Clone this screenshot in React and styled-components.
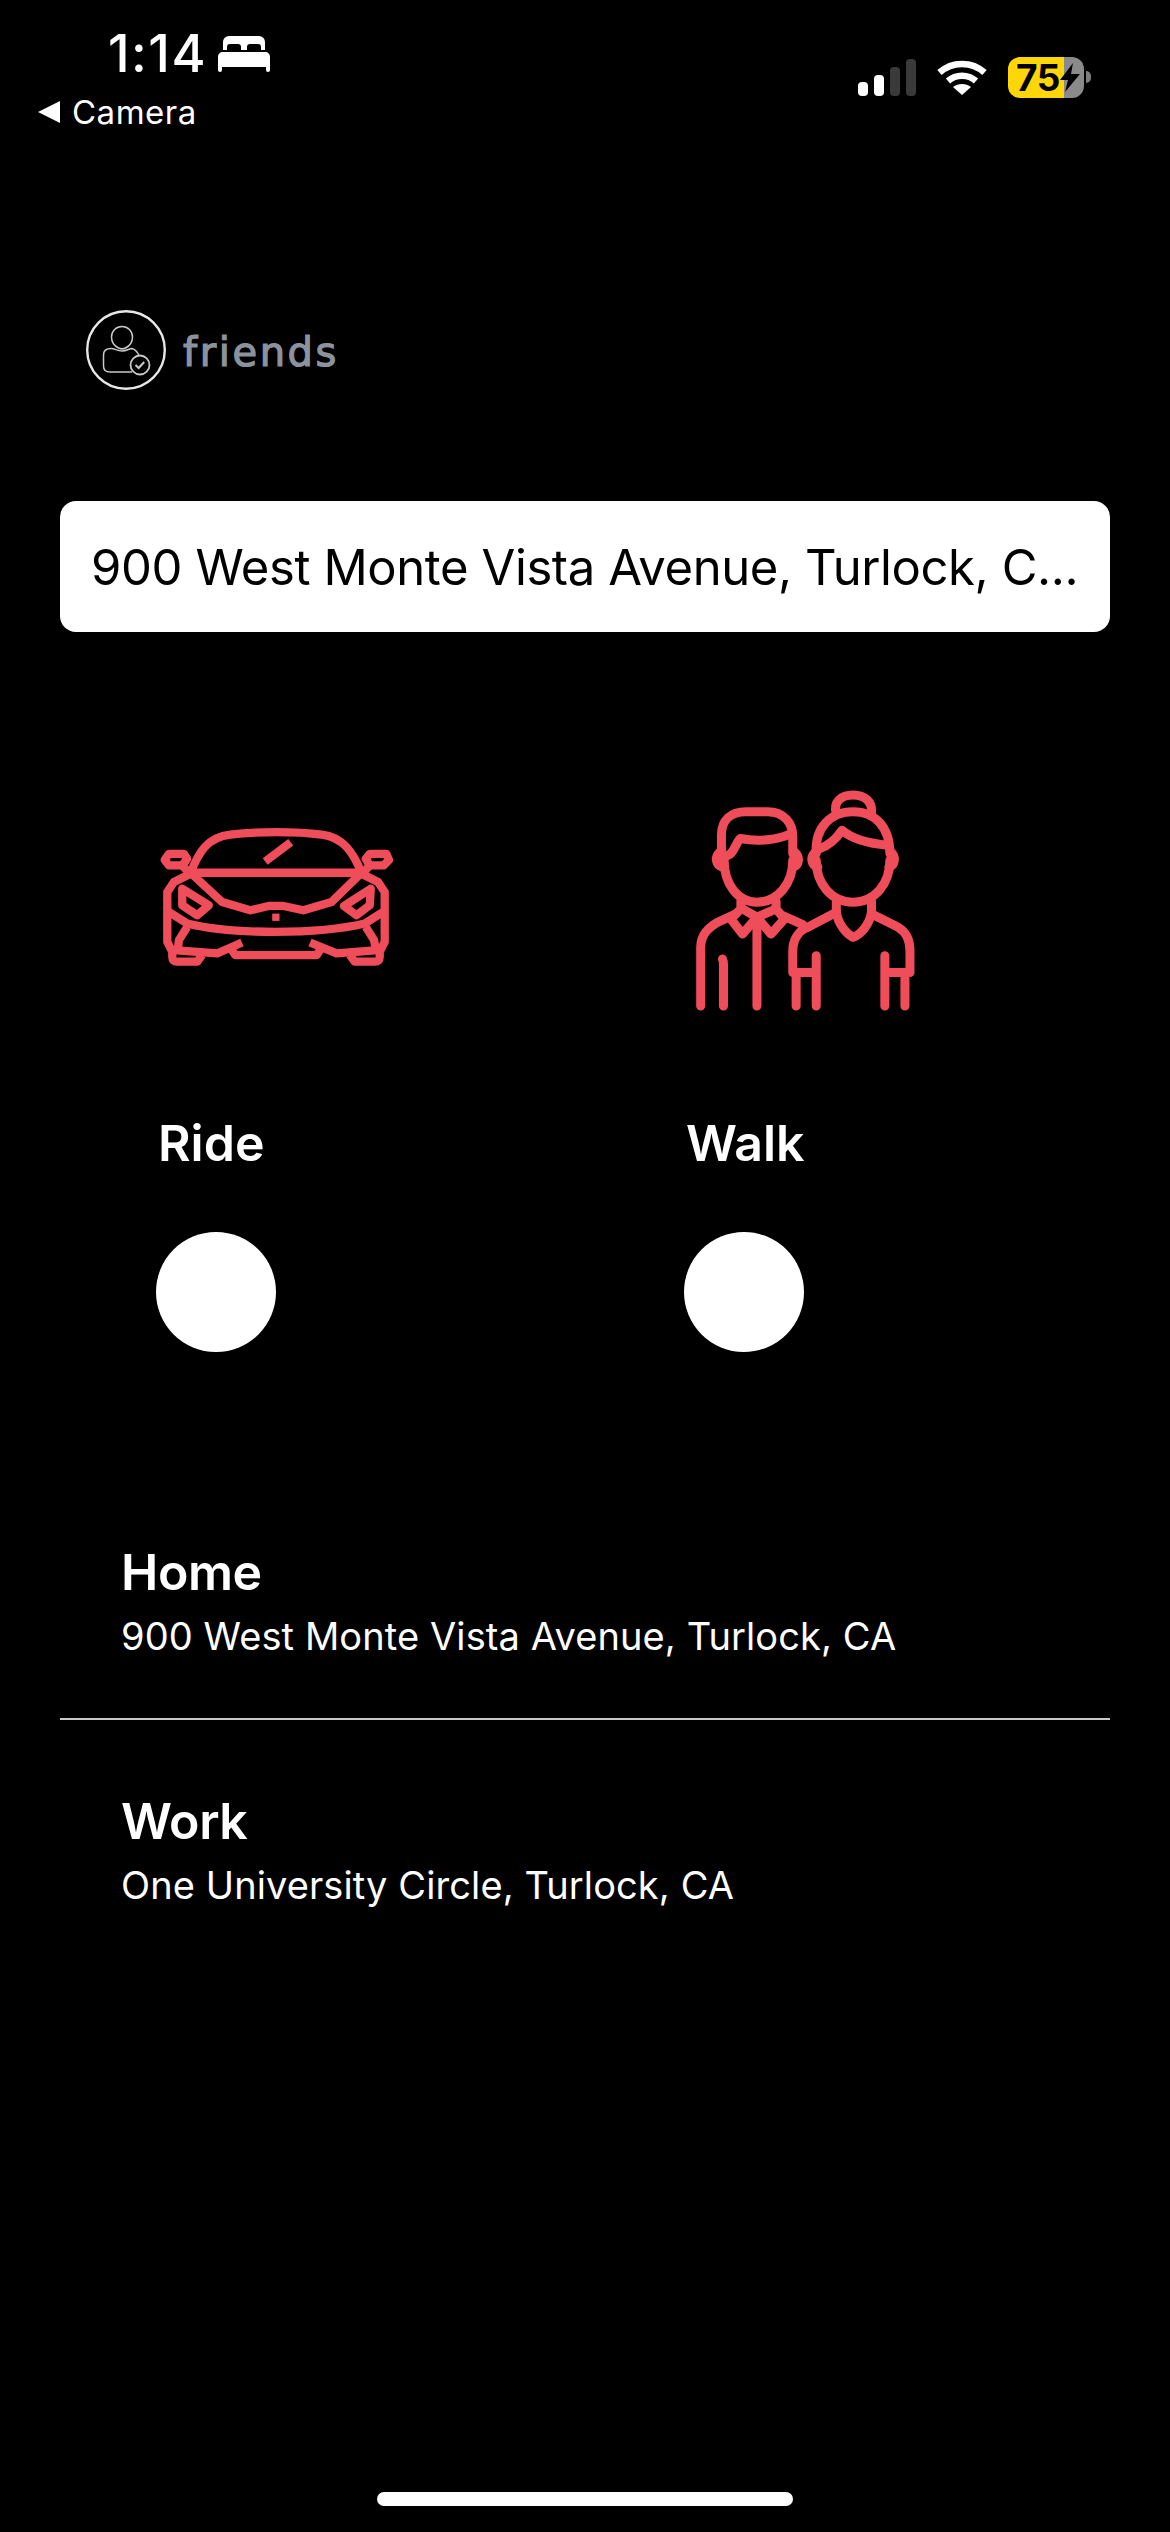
import React from 'react'
import styled, { createGlobalStyle } from 'styled-components'

const GlobalStyle = createGlobalStyle`
  html, body {
    margin: 0;
    background: #000;
  }
  * {
    box-sizing: border-box;
  }
`

const Screen = styled.div`
  width: 1170px;
  height: 2532px;
  background: #000;
  color: #fff;
  font-family: Inter, "Liberation Sans", sans-serif;
  display: flex;
  flex-direction: column;
  overflow: hidden;
`

const StatusBar = styled.header`
  height: 310px;
  padding: 29px 79px 0 38px;
  display: flex;
  justify-content: space-between;
  align-items: flex-start;
`

const StatusLeft = styled.div`
  display: flex;
  flex-direction: column;
`

const TimeRow = styled.div`
  display: flex;
  align-items: center;
  gap: 11px;
  padding-left: 70px;
  height: 50px;
`

const Time = styled.span`
  font-size: 52px;
  font-weight: 500;
  line-height: 50px;
  letter-spacing: 1.5px;
`

const BackLink = styled.div`
  display: flex;
  align-items: center;
  gap: 12px;
  margin-top: 13px;
  height: 40px;
  font-size: 33px;
  letter-spacing: 0.5px;
`

const BackArrow = styled.span`
  width: 0;
  height: 0;
  border-top: 11px solid transparent;
  border-bottom: 11px solid transparent;
  border-right: 22px solid #fff;
`

const StatusRight = styled.div`
  display: flex;
  align-items: center;
  gap: 21px;
  margin-top: 28px;
  height: 40px;
`

const Signal = styled.div`
  display: flex;
  align-items: flex-end;
  gap: 6px;
  height: 37px;
`

const SignalBar = styled.span`
  width: 10px;
  height: ${p => p.$h}px;
  border-radius: 4px;
  background: ${p => (p.$on ? '#fff' : '#3a3a3a')};
`

const Battery = styled.div`
  display: flex;
  align-items: center;
  gap: 2px;
`

const BatteryBody = styled.div`
  width: 76px;
  height: 41px;
  border-radius: 12px;
  background: linear-gradient(to right, #ffd60a 0 74%, #8a8a8a 74% 100%);
  color: #000;
  display: flex;
  align-items: center;
  padding-left: 8px;
  font-size: 37px;
  font-weight: 700;
  letter-spacing: -0.5px;
`

const BatteryNub = styled.span`
  width: 5px;
  height: 12px;
  border-radius: 0 6px 6px 0;
  background: #7d7d7d;
`

const Brand = styled.div`
  display: flex;
  align-items: center;
  gap: 17px;
  padding-left: 86px;
  height: 80px;
`

const BrandName = styled.span`
  font-family: "DejaVu Sans", sans-serif;
  font-size: 40px;
  letter-spacing: 2.6px;
  color: #8b939e;
  line-height: 1;
  padding-top: 3px;
  -webkit-text-stroke: 1.2px #8b939e;
`

const SearchBox = styled.div`
  margin: 111px 60px 0;
  height: 131px;
  background: #fff;
  border-radius: 16px;
  color: #000;
  font-size: 49px;
  display: flex;
  align-items: center;
  padding: 2px 0 0 31px;
  letter-spacing: -0.4px;
  white-space: nowrap;
`

const Modes = styled.section`
  margin-top: 158px;
  padding-left: 156px;
  display: grid;
  grid-template-columns: 528px 1fr;
`

const Mode = styled.div`
  display: flex;
  flex-direction: column;
`

const ModeIcon = styled.div`
  height: 220px;
  padding: 0 0 ${p => p.$lift}px ${p => p.$inset}px;
  display: flex;
  align-items: center;
`

const ModeLabel = styled.div`
  margin-top: 103px;
  padding-left: 2px;
  font-size: 50px;
  font-weight: 600;
  line-height: 60px;
  letter-spacing: 0;
`

const ModeToggle = styled.span`
  display: block;
  margin-top: 59px;
  width: 120px;
  height: 120px;
  border-radius: 50%;
  background: #fff;
`

const Places = styled.section`
  margin-top: 190px;
  display: flex;
  flex-direction: column;
`

const Place = styled.div`
  padding: ${p => p.$top}px 0 0 121px;
  height: ${p => p.$h}px;
`

const PlaceName = styled.div`
  font-size: 50px;
  font-weight: 600;
  line-height: 60px;
  letter-spacing: -0.4px;
`

const PlaceAddress = styled.div`
  margin-top: 10px;
  font-size: 38px;
  line-height: 48px;
  letter-spacing: 0.1px;
`

const Divider = styled.hr`
  margin: 0 60px;
  border: 0;
  height: 2px;
  background: #c9c9c9;
`

const HomeIndicator = styled.div`
  margin: auto auto 26px;
  width: 416px;
  height: 14px;
  border-radius: 7px;
  background: #fff;
`

const Bed = () => (
  <svg width="52" height="36" viewBox="0 0 52 36" fill="#fff">
    <path d="M5 14V6a6 6 0 0 1 6-6h30a6 6 0 0 1 6 6v8h-4v-3c0-2-1-3-3-3h-8c-2 0-3 1-3 3v3h-6v-3c0-2-1-3-3-3h-8c-2 0-3 1-3 3v3z" />
    <path d="M5 16h42c3 0 5 2 5 5v13a2 2 0 0 1-4 0v-3H4v3a2 2 0 0 1-4 0V21c0-3 2-5 5-5z" />
  </svg>
)

const Wifi = () => (
  <svg width="50" height="37" viewBox="0 0 50 37" fill="none" stroke="#fff" strokeWidth="6.5">
    <path d="M2.5 13.5C15 2 35 2 47.5 13.5" />
    <path d="M11 22c8-7 20-7 28 0" />
    <path d="M25 36l-9-8c5-4 13-4 18 0z" fill="#fff" stroke="none" />
  </svg>
)

const Bolt = () => (
  <svg width="20" height="29" viewBox="0 0 20 29" fill="#000">
    <path d="M13 0L0 17h8L5 29 20 11h-9z" />
  </svg>
)

const BrandMark = () => (
  <svg width="80" height="80" viewBox="0 0 80 80" fill="none" stroke="#e8e8e8">
    <circle cx="40" cy="40" r="38.8" strokeWidth="2.4" />
    <g strokeWidth="1.5" stroke="#c8c8c8">
      <path d="M25.5 27a10.5 10.5 0 1 1 21 0c0 5-3 9-7 11c-2 1-5 1-7 0c-4-2-7-6-7-11z" />
      <path d="M46 62H24c-4 0-6.500-2-6.500-6V45c0-5 3.500-6.500 7.500-6.500c4 0 6 2.500 11 2.500c5 0 7-2.500 10-2.500c2 .5 5 2.500 7 7" />
      <circle cx="54" cy="55" r="9.500" strokeWidth="1.800" />
      <path d="M49.500 55l3.200 3 5.500-6" strokeWidth="2" />
    </g>
  </svg>
)

const CarIcon = () => (
  <svg width="234" height="140" viewBox="55 85 705 420" fill="none" stroke="#f04d5a" strokeWidth="25" strokeLinejoin="round">
    <path d="M150 222C175 160 200 115 270 107C350 97 470 97 545 107C610 115 640 160 665 222Z" />
    <path d="M375 188L452 130" />
    <path d="M150 222L245 310L330 335L385 322H430L490 335L575 310L665 222" />
    <path d="M150 225L100 250L80 280V430L95 460V475Q95 490 110 490H170L185 470" />
    <path d="M665 225L715 250L735 280V430L720 460V475Q720 490 705 490H645L630 470" />
    <path d="M72 183L85 165H130L140 180L125 200H85Z" />
    <path d="M678 180L690 165H740L748 183L732 200H690Z" />
    <path d="M125 200L148 225M690 200L667 225" />
    <path d="M125 270L205 320L170 350L125 320Z" />
    <path d="M693 270L612 322L650 350L690 320Z" />
    <rect x="396" y="345" width="22" height="22" fill="#f04d5a" stroke="none" />
    <path d="M85 340L140 375C220 395 300 400 405 400C510 400 590 395 675 375L730 340" />
    <path d="M140 385L115 425L112 452M678 385L703 425L708 452" />
    <path d="M100 455L230 465L305 432M510 432L590 465L715 455" />
    <path d="M270 448L285 470H530L545 448" />
  </svg>
)

const CoupleIcon = () => (
  <svg width="221" height="221" viewBox="40 60 660 660" fill="none" stroke="#f04d5a" strokeWidth="27" strokeLinecap="round" strokeLinejoin="round">
    {/* man */}
    <path d="M130 270C130 340 170 395 228 395C290 395 335 340 335 270" />
    <path d="M122 250V195C122 150 150 125 195 125H260C310 125 335 160 335 200V250" />
    <path d="M330 190C290 210 230 215 178 205C160 225 160 255 130 258" />
    <path d="M118 245C100 260 105 285 125 290M340 245C358 260 355 285 335 290" />
    <path d="M180 392V415L150 445L185 490L228 440L270 490L310 445L285 415V392" />
    <path d="M185 415L228 440L285 415" />
    <path d="M228 445V705M60 705V530C60 490 85 470 110 455L165 430" />
    <path d="M125 565C130 575 128 585 128 600V705M305 435L365 462" />
    {/* woman */}
    <path d="M405 270C405 340 450 395 515 395C580 395 625 340 625 270" />
    <path d="M405 250C400 170 450 125 515 125C580 125 625 170 625 250" />
    <path d="M465 130C455 95 480 75 515 75C550 75 575 95 570 130" />
    <path d="M415 235C445 225 465 205 482 180C510 205 560 220 620 225" />
    <path d="M403 245C385 260 390 285 410 290M628 245C645 260 640 285 622 290" />
    <path d="M465 392V425C470 460 495 490 515 500C540 490 565 460 570 425V392" />
    <path d="M465 425L380 470C350 480 335 510 335 540V605H405V555M345 610V705M405 610V705" />
    <path d="M570 430L650 470C675 485 685 510 685 540V605H610V555M670 610V705M610 605V705" />
  </svg>
)

const App = () => (
  <Screen>
    <GlobalStyle />
    <StatusBar>
      <StatusLeft>
        <TimeRow>
          <Time>1:14</Time>
          <Bed />
        </TimeRow>
        <BackLink>
          <BackArrow />
          Camera
        </BackLink>
      </StatusLeft>
      <StatusRight>
        <Signal>
          <SignalBar $h={14} $on />
          <SignalBar $h={21} $on />
          <SignalBar $h={29} />
          <SignalBar $h={37} />
        </Signal>
        <Wifi />
        <Battery>
          <BatteryBody>
            75
            <Bolt />
          </BatteryBody>
          <BatteryNub />
        </Battery>
      </StatusRight>
    </StatusBar>

    <Brand>
      <BrandMark />
      <BrandName>friends</BrandName>
    </Brand>

    <SearchBox>900 West Monte Vista Avenue, Turlock, C...</SearchBox>

    <Modes>
      <Mode>
        <ModeIcon $inset={3} $lift={6}>
          <CarIcon />
        </ModeIcon>
        <ModeLabel>Ride</ModeLabel>
        <ModeToggle />
      </Mode>
      <Mode>
        <ModeIcon $inset={10} $lift={0}>
          <CoupleIcon />
        </ModeIcon>
        <ModeLabel>Walk</ModeLabel>
        <ModeToggle />
      </Mode>
    </Modes>

    <Places>
      <Place $top={0} $h={176}>
        <PlaceName>Home</PlaceName>
        <PlaceAddress>900 West Monte Vista Avenue, Turlock, CA</PlaceAddress>
      </Place>
      <Divider />
      <Place $top={71} $h={200}>
        <PlaceName>Work</PlaceName>
        <PlaceAddress>One University Circle, Turlock, CA</PlaceAddress>
      </Place>
    </Places>

    <HomeIndicator />
  </Screen>
)

export default App
